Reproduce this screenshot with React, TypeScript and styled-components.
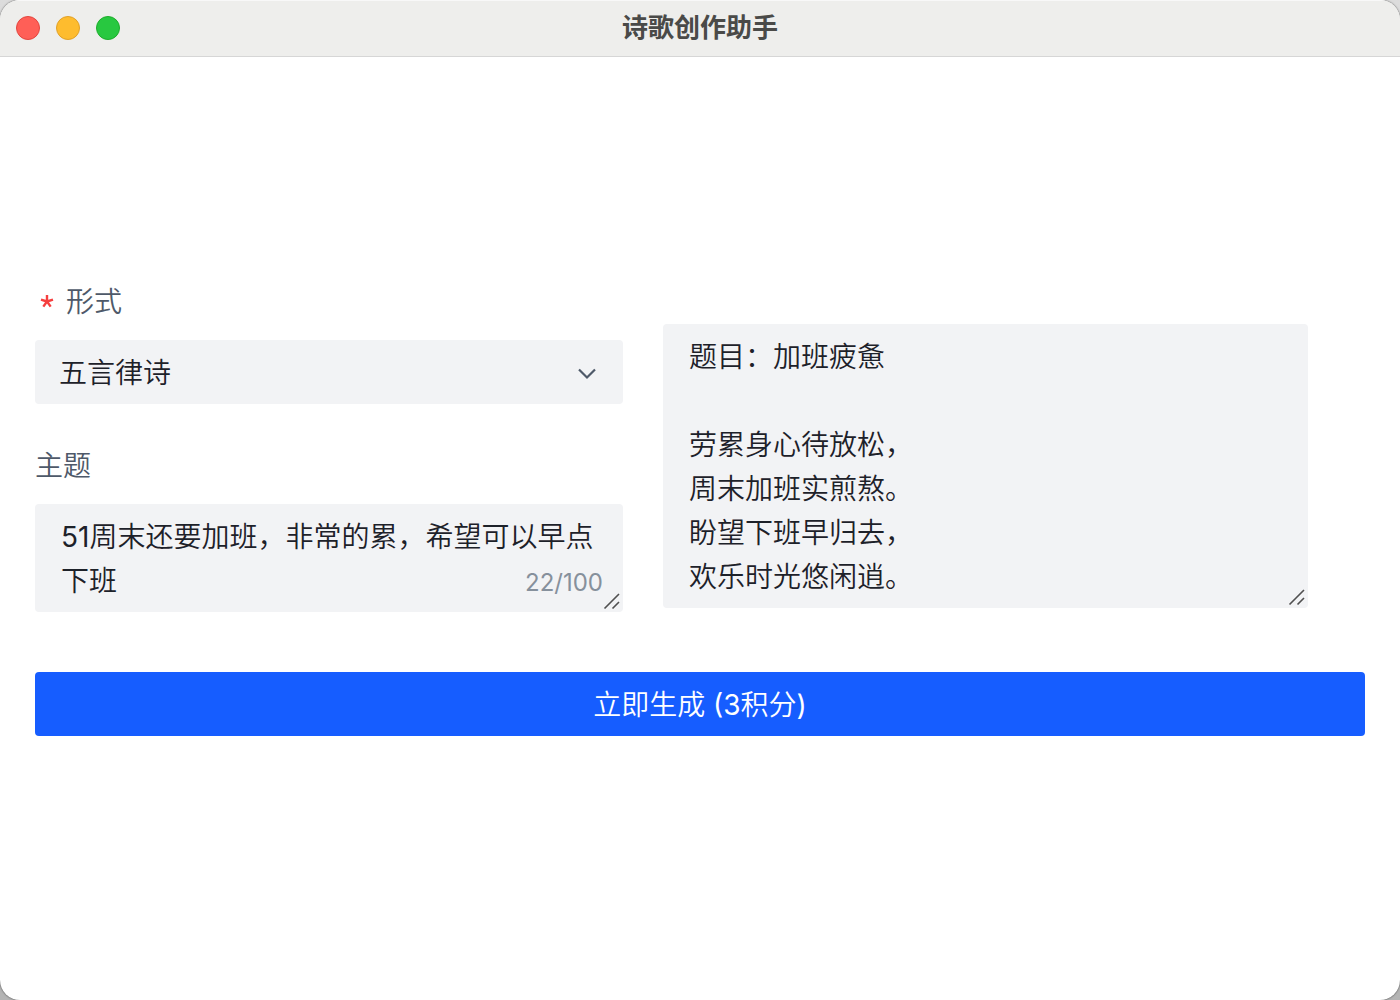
import React, { useId, useState } from "react";
import styled, { createGlobalStyle } from "styled-components";

const GlobalStyle = createGlobalStyle`
  *, *::before, *::after { box-sizing: border-box; }
  body {
    margin: 0;
    background: linear-gradient(#dcdcdc, #b4b4b4);
    font-family: Inter, "Noto Sans CJK SC DemiLight", "Noto Sans CJK SC", sans-serif;
    font-size: 28px;
    line-height: 44px;
    font-weight: 400;
    color: #1d2129;
  }
  button, select, textarea { font: inherit; color: inherit; }
`;

const Window = styled.div`
  display: flex;
  flex-direction: column;
  min-height: 100vh;
  background: #fff;
  border-radius: 20px;
  overflow: hidden;
  box-shadow: 0 0 2px rgba(0, 0, 0, 0.7);
`;

const TitleBar = styled.header`
  display: grid;
  grid-template-columns: 1fr auto 1fr;
  align-items: center;
  height: 57px;
  padding: 0 16px;
  background: #eeeeec;
  box-shadow: inset 0 1px #f8f8f8;
  border-bottom: 1px solid #d6d6d6;
`;

const Lights = styled.div`
  display: flex;
  gap: 16px;
`;

const Light = styled.button<{ $fill: string; $edge: string }>`
  width: 24px;
  height: 24px;
  padding: 0;
  border: 1px solid ${(p) => p.$edge};
  border-radius: 50%;
  background: ${(p) => p.$fill};
`;

const Title = styled.h1`
  margin: 0;
  font-family: "Noto Sans CJK SC", sans-serif;
  font-size: 26px;
  line-height: 44px;
  padding-bottom: 4px;
  font-weight: 700;
  color: #4a4a48;
`;

const Main = styled.main`
  flex: 1;
  display: flex;
  flex-direction: column;
  justify-content: center;
  padding: 0 35px 41px;
`;

const Form = styled.form`
  display: flex;
  flex-direction: column;
  gap: 60px;
`;

const Columns = styled.div`
  display: grid;
  grid-template-columns: 588fr 702fr;
  gap: 40px;
`;

const Fields = styled.div`
  display: flex;
  flex-direction: column;
  gap: 40px;
`;

const Field = styled.div`
  display: flex;
  flex-direction: column;
  gap: 16px;
`;

const Label = styled.label`
  display: flex;
  align-items: center;
  gap: 12px;
  color: #4e5969;
`;

const RequiredMark = styled.svg`
  width: 14px;
  height: 14px;
  margin-left: 5px;
  fill: none;
  stroke: #f53f3f;
  stroke-width: 2.4;
`;

const Control = styled.div`
  position: relative;
  display: flex;
`;

const Select = styled.select`
  appearance: none;
  width: 100%;
  height: 64px;
  padding: 2px 64px 0 24px;
  border: 0;
  border-radius: 4px;
  background: #f2f3f5;
`;

const Chevron = styled.svg`
  position: absolute;
  right: 24px;
  top: 22px;
  width: 24px;
  height: 24px;
  fill: none;
  stroke: #4e5969;
  stroke-width: 2.2;
  pointer-events: none;
`;

const TextArea = styled.textarea`
  display: block;
  width: 100%;
  padding: 11px 26px 9px;
  border: 0;
  border-radius: 4px;
  background: #f2f3f5;
  resize: none;
  overflow: hidden;
`;

const Grip = styled.svg`
  position: absolute;
  right: 2px;
  bottom: 2px;
  width: 18px;
  height: 18px;
  fill: none;
  stroke: #505050;
  stroke-width: 1.6;
  pointer-events: none;
`;

const Counter = styled.span`
  position: absolute;
  right: 20px;
  bottom: 7px;
  font-size: 24px;
  color: #86909c;
`;

const Result = styled.div`
  padding: 44px 57px 0 0;
`;

const Submit = styled.button`
  height: 64px;
  padding: 2px 32px 0;
  border: 0;
  border-radius: 4px;
  background: #165dff;
  color: #fff;
`;

const POEM = [
  "题目：加班疲惫",
  "",
  "劳累身心待放松，",
  "周末加班实煎熬。",
  "盼望下班早归去，",
  "欢乐时光悠闲逍。",
].join("\n");

const MAX_LENGTH = 100;

function ResizeGrip() {
  return (
    <Grip viewBox="0 0 18 18" aria-hidden="true">
      <path d="M1.5 16.5 L16 2 M9.5 16.5 L16 10" />
    </Grip>
  );
}

export default function App() {
  const formId = useId();
  const topicId = useId();
  const [topic, setTopic] = useState("51周末还要加班，非常的累，希望可以早点下班");
  const [poem, setPoem] = useState(POEM);

  return (
    <>
      <GlobalStyle />
      <Window>
        <TitleBar>
          <Lights>
            <Light type="button" aria-label="关闭" $fill="#ff5f57" $edge="#e2463f" />
            <Light type="button" aria-label="最小化" $fill="#febc2e" $edge="#e0a028" />
            <Light type="button" aria-label="缩放" $fill="#28c840" $edge="#1dad2b" />
          </Lights>
          <Title>诗歌创作助手</Title>
        </TitleBar>
        <Main>
          <Form onSubmit={(e) => e.preventDefault()}>
            <Columns>
              <Fields>
                <Field>
                  <Label htmlFor={formId}>
                    <RequiredMark viewBox="0 0 14 14" aria-hidden="true">
                      <path d="M7 6.5V0M7 6.5L1 4.6M7 6.5L13 4.6M7 6.5L3.3 11.6M7 6.5L10.7 11.6" />
                    </RequiredMark>
                    形式
                  </Label>
                  <Control>
                    <Select id={formId} defaultValue="五言律诗" required>
                      <option>五言律诗</option>
                    </Select>
                    <Chevron viewBox="0 0 24 24" aria-hidden="true">
                      <path d="M4 7.5L12 15.5L20 7.5" />
                    </Chevron>
                  </Control>
                </Field>
                <Field>
                  <Label htmlFor={topicId}>主题</Label>
                  <Control>
                    <TextArea
                      id={topicId}
                      rows={2}
                      maxLength={MAX_LENGTH}
                      value={topic}
                      onChange={(e) => setTopic(e.target.value)}
                    />
                    <Counter>
                      {topic.length}/{MAX_LENGTH}
                    </Counter>
                    <ResizeGrip />
                  </Control>
                </Field>
              </Fields>
              <Result>
                <Control>
                  <TextArea
                    aria-label="诗歌"
                    rows={6}
                    value={poem}
                    onChange={(e) => setPoem(e.target.value)}
                  />
                  <ResizeGrip />
                </Control>
              </Result>
            </Columns>
            <Submit type="submit">立即生成 (3积分)</Submit>
          </Form>
        </Main>
      </Window>
    </>
  );
}
